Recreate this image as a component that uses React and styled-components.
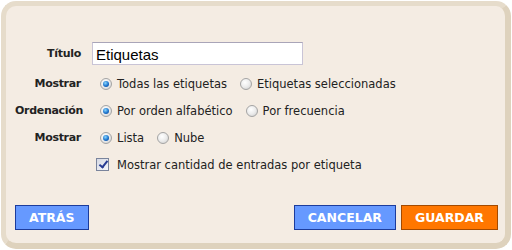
import styled, { createGlobalStyle } from 'styled-components';

const GlobalStyle = createGlobalStyle`
  html, body {
    margin: 0;
    padding: 0;
    background: #ffffff;
  }
  body {
    font-family: 'DejaVu Sans', Verdana, sans-serif;
  }
`;

const sortOptions = [
  { name: 'Por orden alfabético', checked: true },
  { name: 'Por frecuencia', checked: false },
];

function Choice({ group, label, checked }) {
  return (
    <Option>
      <Radio type="radio" name={group} defaultChecked={checked} />
      {label}
    </Option>
  );
}

function App() {
  return (
    <>
      <GlobalStyle />
      <Frame>
        <Form>
          <Label>Título</Label>
          <TitleInput defaultValue="Etiquetas" />

          <Label>Mostrar</Label>
          <Options>
            <Choice group="show" label="Todas las etiquetas" checked />
            <Choice group="show" label="Etiquetas seleccionadas" />
          </Options>

          <Label>Ordenación</Label>
          <Options>
            {sortOptions.map((o) => (
              <Choice key={o.name} group="sort" label={o.name} checked={o.checked} />
            ))}
          </Options>

          <Label>Mostrar</Label>
          <Options>
            <Choice group="display" label="Lista" checked />
            <Choice group="display" label="Nube" />
          </Options>

          <span />
          <Option $check>
            <Check type="checkbox" defaultChecked />
            Mostrar cantidad de entradas por etiqueta
          </Option>
        </Form>

        <Footer>
          <Button>Atrás</Button>
          <Actions>
            <Button>Cancelar</Button>
            <Button $primary>Guardar</Button>
          </Actions>
        </Footer>
      </Frame>
    </>
  );
}

const Frame = styled.div`
  box-sizing: border-box;
  width: 510px;
  height: 248px;
  margin: 1px 0 0 1px;
  background: #f4ece3;
  border: 5px solid #e6dccb;
  border-right-width: 6px;
  border-bottom-width: 6px;
  border-right-color: #ded2bd;
  border-bottom-color: #ded2bd;
  border-radius: 15px;
  display: flex;
  flex-direction: column;
  justify-content: space-between;
  padding: 31px 7px 13px 9px;
`;

const Form = styled.div`
  display: grid;
  grid-template-columns: 66px 1fr;
  grid-template-rows: 33px;
  grid-auto-rows: 27px;
  column-gap: 11px;
  align-items: center;
`;

const Label = styled.div`
  text-align: right;
  font-size: 11px;
  letter-spacing: -0.3px;
  font-weight: bold;
  color: #222222;
`;

const TitleInput = styled.input`
  box-sizing: border-box;
  width: 211px;
  height: 23px;
  padding: 1px 3px 0;
  border: 1px solid #c9c4d6;
  border-top-color: #a9a5b8;
  background: #ffffff;
  font-family: 'Liberation Sans', Arial, sans-serif;
  font-size: 15px;
  color: #000000;
  outline: none;
`;

const Options = styled.div`
  display: flex;
  align-items: center;
  gap: 5px;
`;

const Option = styled.label`
  display: flex;
  align-items: center;
  gap: ${(p) => (p.$check ? '8px' : '5px')};
  font-size: 11.5px;
  color: #222222;
  white-space: nowrap;
`;

const Radio = styled.input`
  appearance: none;
  box-sizing: border-box;
  margin: 0 0 0 8px;
  width: 12px;
  height: 12px;
  border-radius: 50%;
  border: 1px solid #a4a4a4;
  background: radial-gradient(circle at 40% 35%, #ffffff 0%, #ececec 50%, #cacaca 100%);
  position: relative;
  &:checked::after {
    content: '';
    position: absolute;
    left: 2px;
    top: 2px;
    width: 6px;
    height: 6px;
    border-radius: 50%;
    background: radial-gradient(circle at 40% 35%, #8ad8ff 0%, #1b72cc 55%, #0c3f88 100%);
  }
`;

const Check = styled.input`
  appearance: none;
  box-sizing: border-box;
  margin: 0 0 0 4px;
  width: 13px;
  height: 13px;
  border: 1px solid #7a849c;
  background: linear-gradient(135deg, #d6d9e4 0%, #f4f5f9 100%);
  position: relative;
  &:checked::after {
    content: '';
    position: absolute;
    left: 3.5px;
    top: 0px;
    width: 3px;
    height: 7px;
    border: solid #263a92;
    border-width: 0 2px 2px 0;
    transform: rotate(38deg);
  }
`;

const Footer = styled.div`
  display: flex;
  justify-content: space-between;
  align-items: center;
`;

const Actions = styled.div`
  display: flex;
  gap: 5px;
`;

const Button = styled.button`
  height: 25px;
  padding: 0 13px;
  border: 1px solid ${(p) => (p.$primary ? '#a34a00' : '#1c3c9c')};
  background: ${(p) => (p.$primary ? '#ff7700' : '#6699ff')};
  color: #ffffff;
  font-family: 'DejaVu Sans', Tahoma, sans-serif;
  font-size: 12.5px;
  font-weight: bold;
  text-transform: uppercase;
  cursor: pointer;
`;

export default App;
